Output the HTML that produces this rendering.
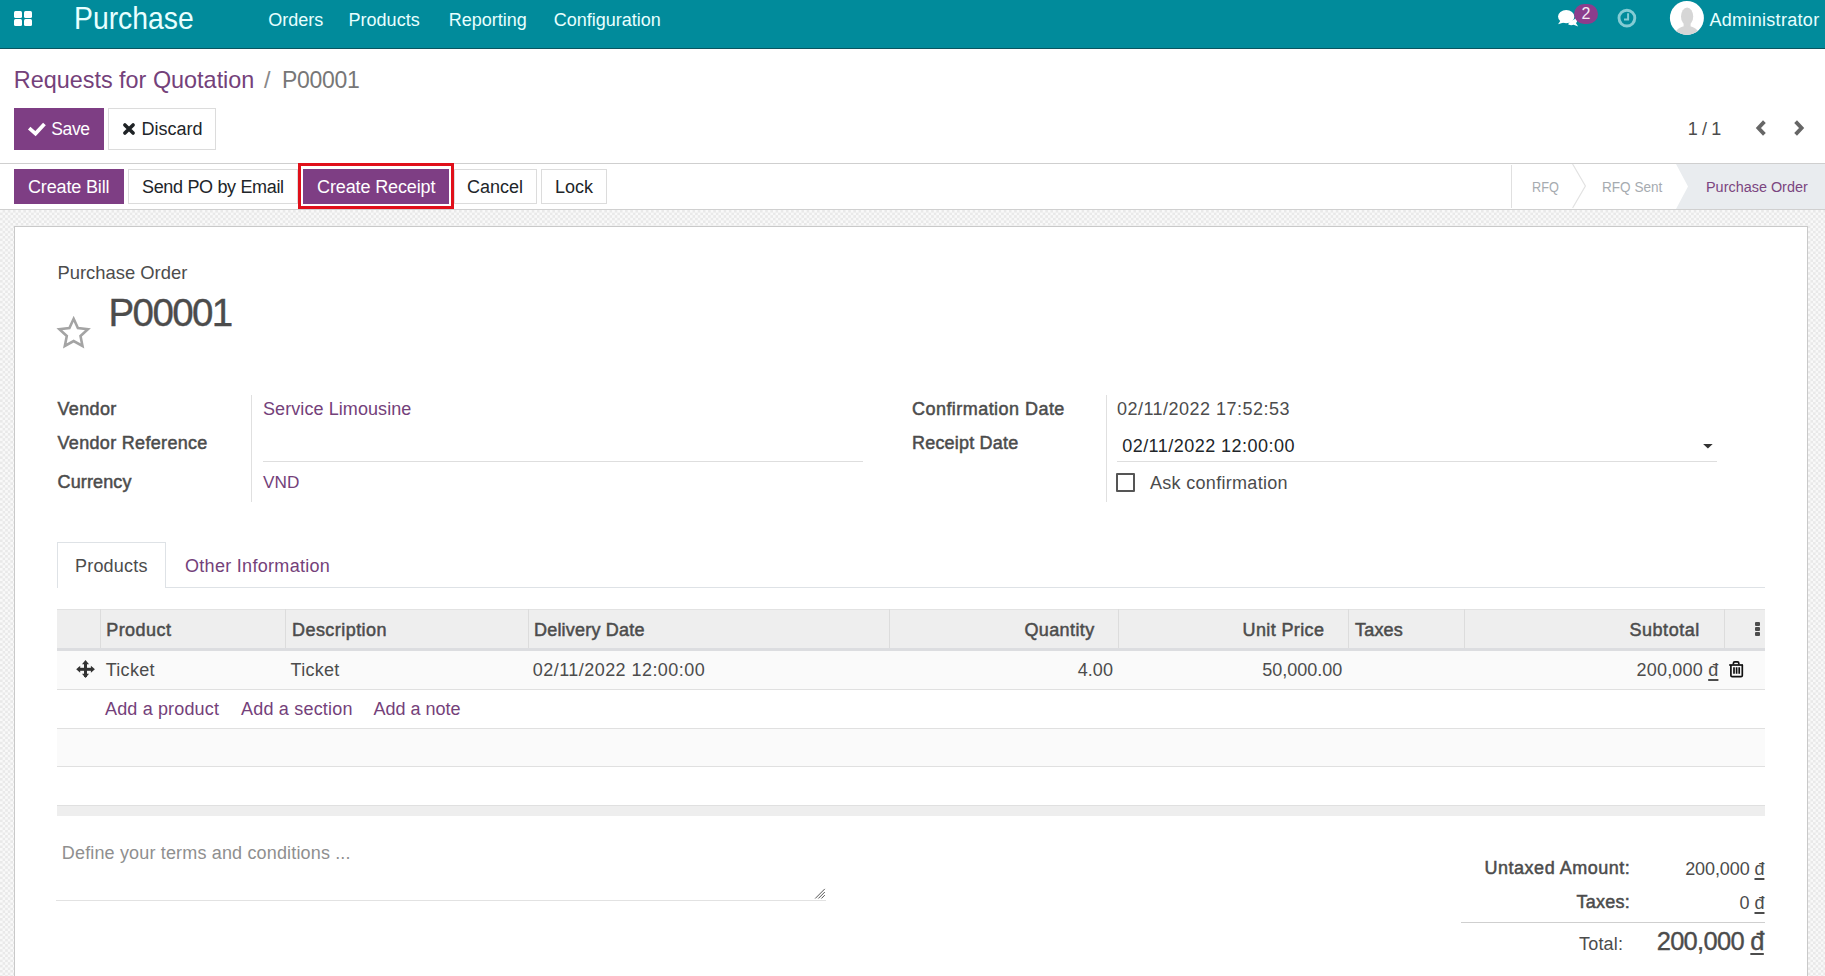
<!DOCTYPE html>
<html><head><meta charset="utf-8"><title>Purchase</title>
<style>
html,body{margin:0;padding:0;}
body{width:1825px;height:976px;overflow:hidden;position:relative;background:#fff;font-family:"Liberation Sans",sans-serif;}
.t{position:absolute;white-space:nowrap;}
.r{position:absolute;}
.dg{text-decoration:underline;text-decoration-thickness:1.5px;text-underline-offset:2.5px;}
svg{position:absolute;}
</style></head><body>
<div class="r" style="left:0px;top:0px;width:1825px;height:48px;background:#018b9b"></div>
<div class="r" style="left:0px;top:48px;width:1825px;height:1px;background:#0a5560"></div>
<div class="r" style="left:0px;top:210px;width:1825px;height:766px;background:repeating-conic-gradient(#e9e9e9 0 25%,#f9f9f9 0 50%) 0 0/5.2px 5.2px"></div>
<div class="r" style="left:0px;top:163px;width:1825px;height:1px;background:#cfcfcf"></div>
<div class="r" style="left:0px;top:209px;width:1825px;height:1px;background:#d0d0d0"></div>
<div class="r" style="left:14px;top:226px;width:1794px;height:774px;background:#fff;border:1px solid #c9c9c9;box-sizing:border-box"></div>
<div class="r" style="left:14px;top:11px;width:8px;height:7px;background:#fff;border-radius:1.5px"></div>
<div class="r" style="left:24px;top:11px;width:8px;height:7px;background:#fff;border-radius:1.5px"></div>
<div class="r" style="left:14px;top:19.3px;width:8px;height:7.0px;background:#fff;border-radius:1.5px"></div>
<div class="r" style="left:24px;top:19.3px;width:8px;height:7.0px;background:#fff;border-radius:1.5px"></div>
<div class="t" style="top:2.88px;font-size:31.2px;line-height:31.2px;color:#e8ffff;left:73.8px;transform:scaleX(0.908);transform-origin:0 0;">Purchase</div>
<div class="t" style="top:10.76px;font-size:18px;line-height:18px;color:#e8ffff;left:268.3px;">Orders</div>
<div class="t" style="top:10.76px;font-size:18px;line-height:18px;color:#e8ffff;left:348.6px;">Products</div>
<div class="t" style="top:10.76px;font-size:18px;line-height:18px;color:#e8ffff;left:448.7px;">Reporting</div>
<div class="t" style="top:10.76px;font-size:18px;line-height:18px;color:#e8ffff;left:553.7px;">Configuration</div>
<div class="t" style="top:10.56px;font-size:18px;line-height:18px;color:#e8ffff;letter-spacing:0.3px;left:1709.5px;">Administrator</div>
<div class="t" style="top:68.88px;font-size:23.4px;line-height:23.4px;color:#74417a;left:13.8px;">Requests for Quotation</div>
<div class="t" style="top:68.88px;font-size:23.4px;line-height:23.4px;color:#888;left:264px;">/</div>
<div class="t" style="top:69.22px;font-size:23px;line-height:23px;color:#777;letter-spacing:-0.3px;left:282px;">P00001</div>
<div class="r" style="left:14px;top:108px;width:90px;height:42px;background:#7e3e84"></div>
<div class="t" style="top:120.78px;font-size:17.5px;line-height:17.5px;color:#fff;letter-spacing:-0.4px;left:51.3px;">Save</div>
<div class="r" style="left:108px;top:108px;width:108px;height:42px;background:#fff;border:1px solid #dcdcdc;box-sizing:border-box"></div>
<div class="t" style="top:119.56px;font-size:18px;line-height:18px;color:#212529;left:141.6px;">Discard</div>
<div class="t" style="top:119.96px;font-size:18px;line-height:18px;color:#4c4c4c;letter-spacing:-0.4px;left:1687.8px;">1 / 1</div>
<div class="r" style="left:14px;top:169px;width:110px;height:35px;background:#7e3e84"></div>
<div class="t" style="top:178.16px;font-size:18px;line-height:18px;color:#fff;letter-spacing:-0.15px;left:28px;">Create Bill</div>
<div class="r" style="left:128px;top:169px;width:170px;height:35px;background:#fff;border:1px solid #dcdcdc;box-sizing:border-box"></div>
<div class="t" style="top:178.16px;font-size:18px;line-height:18px;color:#212529;letter-spacing:-0.33px;left:142px;">Send PO by Email</div>
<div class="r" style="left:454px;top:169px;width:83px;height:35px;background:#fff;border:1px solid #dcdcdc;box-sizing:border-box"></div>
<div class="t" style="top:178.16px;font-size:18px;line-height:18px;color:#212529;left:467px;">Cancel</div>
<div class="r" style="left:541px;top:169px;width:66px;height:35px;background:#fff;border:1px solid #dcdcdc;box-sizing:border-box"></div>
<div class="t" style="top:178.16px;font-size:18px;line-height:18px;color:#212529;left:555px;">Lock</div>
<div class="r" style="left:298px;top:163px;width:156px;height:46px;border:3px solid #e0101a;box-sizing:border-box"></div>
<div class="r" style="left:303px;top:169px;width:146px;height:35px;background:#7e3e84"></div>
<div class="t" style="top:178.16px;font-size:18px;line-height:18px;color:#fff;letter-spacing:-0.12px;left:317px;">Create Receipt</div>
<div class="r" style="left:1511px;top:165px;width:1px;height:43px;background:#e0e0e0"></div>
<div class="r" style="left:1676px;top:164px;width:149px;height:45px;background:#e9ecef;clip-path:polygon(0 0,100% 0,100% 100%,0 100%,12px 50%)"></div>
<div class="t" style="top:178.77px;font-size:15.5px;line-height:15.5px;color:#a6abb0;left:1531.5px;transform:scaleX(0.82);transform-origin:0 0;">RFQ</div>
<div class="t" style="top:178.77px;font-size:15.5px;line-height:15.5px;color:#a6abb0;left:1602.3px;transform:scaleX(0.875);transform-origin:0 0;">RFQ Sent</div>
<div class="t" style="top:178.77px;font-size:15.5px;line-height:15.5px;color:#7b4580;left:1705.7px;transform:scaleX(0.93);transform-origin:0 0;">Purchase Order</div>
<div class="t" style="top:264.42px;font-size:18.4px;line-height:18.4px;color:#4c4c4c;left:57.5px;">Purchase Order</div>
<div class="t" style="top:293.70px;font-size:38.5px;line-height:38.5px;color:#4c4c4c;letter-spacing:-1.6px;left:108.5px;-webkit-text-stroke:0.4px #4c4c4c;">P00001</div>
<div class="t" style="top:399.71px;font-size:18px;line-height:18px;color:#4c4c4c;letter-spacing:0.358px;left:57.5px;-webkit-text-stroke:0.5px #4c4c4c;">Vendor</div>
<div class="t" style="top:434.11px;font-size:18px;line-height:18px;color:#4c4c4c;letter-spacing:0.319px;left:57.5px;-webkit-text-stroke:0.5px #4c4c4c;">Vendor Reference</div>
<div class="t" style="top:473.11px;font-size:18px;line-height:18px;color:#4c4c4c;letter-spacing:0.135px;left:57.5px;-webkit-text-stroke:0.5px #4c4c4c;">Currency</div>
<div class="t" style="top:399.71px;font-size:18px;line-height:18px;color:#4c4c4c;letter-spacing:0.455px;left:912px;-webkit-text-stroke:0.5px #4c4c4c;">Confirmation Date</div>
<div class="t" style="top:433.71px;font-size:18px;line-height:18px;color:#4c4c4c;letter-spacing:0.195px;left:912px;-webkit-text-stroke:0.5px #4c4c4c;">Receipt Date</div>
<div class="r" style="left:251px;top:395px;width:1px;height:107px;background:#e0e0e0"></div>
<div class="r" style="left:1106px;top:395px;width:1px;height:107px;background:#e0e0e0"></div>
<div class="t" style="top:399.96px;font-size:18px;line-height:18px;color:#74417a;letter-spacing:0.08px;left:263px;">Service Limousine</div>
<div class="t" style="top:474.04px;font-size:17.2px;line-height:17.2px;color:#74417a;left:263px;">VND</div>
<div class="r" style="left:263px;top:461px;width:600px;height:1px;background:#dedede"></div>
<div class="t" style="top:399.96px;font-size:18px;line-height:18px;color:#4c4c4c;letter-spacing:0.48px;left:1117px;">02/11/2022 17:52:53</div>
<div class="t" style="top:436.56px;font-size:18px;line-height:18px;color:#212529;letter-spacing:0.47px;left:1122.2px;">02/11/2022 12:00:00</div>
<div class="r" style="left:1117px;top:461px;width:600px;height:1px;background:#dedede"></div>
<div class="r" style="left:1116px;top:473px;width:19px;height:19px;background:#fff;border:2px solid #555;box-sizing:border-box;border-radius:1px"></div>
<div class="t" style="top:473.76px;font-size:18px;line-height:18px;color:#4c4c4c;letter-spacing:0.3px;left:1150px;">Ask confirmation</div>
<div class="r" style="left:57px;top:587px;width:1708px;height:1px;background:#dee2e6"></div>
<div class="r" style="left:57px;top:542px;width:109px;height:46px;background:#fff;border:1px solid #dee2e6;border-bottom:none;box-sizing:border-box"></div>
<div class="t" style="top:556.76px;font-size:18px;line-height:18px;color:#4c4c4c;letter-spacing:0.2px;left:75px;">Products</div>
<div class="t" style="top:556.76px;font-size:18px;line-height:18px;color:#74417a;letter-spacing:0.3px;left:185px;">Other Information</div>
<div class="r" style="left:57px;top:609px;width:1708px;height:39px;background:#eeeeee"></div>
<div class="r" style="left:57px;top:648px;width:1708px;height:3px;background:#dcdde0"></div>
<div class="r" style="left:57px;top:609px;width:1708px;height:1px;background:#e2e2e2"></div>
<div class="r" style="left:100px;top:609px;width:1px;height:39px;background:#dcdcdc"></div>
<div class="r" style="left:285px;top:609px;width:1px;height:39px;background:#dcdcdc"></div>
<div class="r" style="left:528px;top:609px;width:1px;height:39px;background:#dcdcdc"></div>
<div class="r" style="left:889px;top:609px;width:1px;height:39px;background:#dcdcdc"></div>
<div class="r" style="left:1118px;top:609px;width:1px;height:39px;background:#dcdcdc"></div>
<div class="r" style="left:1348px;top:609px;width:1px;height:39px;background:#dcdcdc"></div>
<div class="r" style="left:1464px;top:609px;width:1px;height:39px;background:#dcdcdc"></div>
<div class="r" style="left:1724px;top:609px;width:1px;height:39px;background:#dcdcdc"></div>
<div class="t" style="top:621.11px;font-size:18px;line-height:18px;color:#4c4c4c;letter-spacing:0.467px;left:106.2px;-webkit-text-stroke:0.5px #4c4c4c;">Product</div>
<div class="t" style="top:621.11px;font-size:18px;line-height:18px;color:#4c4c4c;letter-spacing:0.451px;left:292px;-webkit-text-stroke:0.5px #4c4c4c;">Description</div>
<div class="t" style="top:621.11px;font-size:18px;line-height:18px;color:#4c4c4c;letter-spacing:0.205px;left:534px;-webkit-text-stroke:0.5px #4c4c4c;">Delivery Date</div>
<div class="t" style="top:621.11px;font-size:18px;line-height:18px;color:#4c4c4c;letter-spacing:0.396px;right:730.404px;text-align:right;-webkit-text-stroke:0.5px #4c4c4c;">Quantity</div>
<div class="t" style="top:621.11px;font-size:18px;line-height:18px;color:#4c4c4c;letter-spacing:0.378px;right:500.622px;text-align:right;-webkit-text-stroke:0.5px #4c4c4c;">Unit Price</div>
<div class="t" style="top:621.11px;font-size:18px;line-height:18px;color:#4c4c4c;letter-spacing:0.196px;left:1355px;-webkit-text-stroke:0.5px #4c4c4c;">Taxes</div>
<div class="t" style="top:621.11px;font-size:18px;line-height:18px;color:#4c4c4c;letter-spacing:0.519px;right:125.28099999999995px;text-align:right;-webkit-text-stroke:0.5px #4c4c4c;">Subtotal</div>
<div class="r" style="left:1754.5px;top:621.5px;width:5.0px;height:4.0px;background:#4c4c4c;border-radius:1px"></div>
<div class="r" style="left:1754.5px;top:626.5px;width:5.0px;height:4.0px;background:#4c4c4c;border-radius:1px"></div>
<div class="r" style="left:1754.5px;top:631.5px;width:5.0px;height:4.0px;background:#4c4c4c;border-radius:1px"></div>
<div class="r" style="left:57px;top:651px;width:1708px;height:38px;background:#fafafa"></div>
<div class="r" style="left:57px;top:689px;width:1708px;height:1px;background:#e0e0e0"></div>
<div class="t" style="top:660.76px;font-size:18px;line-height:18px;color:#4c4c4c;letter-spacing:0.3px;left:105.7px;">Ticket</div>
<div class="t" style="top:660.76px;font-size:18px;line-height:18px;color:#4c4c4c;letter-spacing:0.3px;left:290.5px;">Ticket</div>
<div class="t" style="top:660.56px;font-size:18px;line-height:18px;color:#4c4c4c;letter-spacing:0.45px;left:532.8px;">02/11/2022 12:00:00</div>
<div class="t" style="top:660.76px;font-size:18px;line-height:18px;color:#4c4c4c;right:712.0999999999999px;text-align:right;">4.00</div>
<div class="t" style="top:660.76px;font-size:18px;line-height:18px;color:#4c4c4c;right:482.70000000000005px;text-align:right;">50,000.00</div>
<div class="t" style="top:660.76px;font-size:18px;line-height:18px;color:#4c4c4c;letter-spacing:0.2px;right:106.59999999999995px;text-align:right;">200,000 <span class="dg">đ</span></div>
<div class="t" style="top:700.06px;font-size:18px;line-height:18px;color:#74417a;letter-spacing:0.15px;left:105px;">Add a product</div>
<div class="t" style="top:700.06px;font-size:18px;line-height:18px;color:#74417a;letter-spacing:0.2px;left:241px;">Add a section</div>
<div class="t" style="top:700.06px;font-size:18px;line-height:18px;color:#74417a;left:373.5px;">Add a note</div>
<div class="r" style="left:57px;top:728px;width:1708px;height:1px;background:#e0e0e0"></div>
<div class="r" style="left:57px;top:729px;width:1708px;height:37px;background:#fafafa"></div>
<div class="r" style="left:57px;top:766px;width:1708px;height:1px;background:#e0e0e0"></div>
<div class="r" style="left:57px;top:805px;width:1708px;height:1px;background:#e0e0e0"></div>
<div class="r" style="left:57px;top:806px;width:1708px;height:10px;background:#eeeeee"></div>
<div class="t" style="top:843.76px;font-size:18px;line-height:18px;color:#8f8f8f;letter-spacing:0.16px;left:61.8px;">Define your terms and conditions ...</div>
<div class="r" style="left:56px;top:900px;width:770px;height:1px;background:#e2e2e2"></div>
<div class="t" style="top:859.11px;font-size:18px;line-height:18px;color:#4c4c4c;letter-spacing:0.514px;right:194.68600000000004px;text-align:right;-webkit-text-stroke:0.5px #4c4c4c;">Untaxed Amount:</div>
<div class="t" style="top:859.56px;font-size:18px;line-height:18px;color:#4c4c4c;letter-spacing:-0.1px;right:60.6px;text-align:right;">200,000 <span class="dg">đ</span></div>
<div class="t" style="top:893.11px;font-size:18px;line-height:18px;color:#4c4c4c;letter-spacing:0.246px;right:194.95400000000004px;text-align:right;-webkit-text-stroke:0.5px #4c4c4c;">Taxes:</div>
<div class="t" style="top:893.56px;font-size:18px;line-height:18px;color:#4c4c4c;right:60.5px;text-align:right;">0 <span class="dg">đ</span></div>
<div class="r" style="left:1461px;top:922px;width:304px;height:1px;background:#cfcfcf"></div>
<div class="t" style="top:935.16px;font-size:18px;line-height:18px;color:#4c4c4c;letter-spacing:0.2px;right:201.8px;text-align:right;">Total:</div>
<div class="t" style="top:928.71px;font-size:25.5px;line-height:25.5px;color:#4c4c4c;letter-spacing:-0.7px;right:61.2px;text-align:right;-webkit-text-stroke:0.35px #4c4c4c;">200,000 <span class="dg">đ</span></div>
<svg style="left:26px;top:118px" width="22" height="22" viewBox="26 118 22 22"><polyline points="30.6,129.4 35.5,133.6 43.2,125.3" fill="none" stroke="#fff" stroke-width="3.7" stroke-linecap="square"/></svg>
<svg style="left:118px;top:118px" width="22" height="22" viewBox="118 118 22 22"><path d="M124.9,124.9 L133.1,133.1 M133.1,124.9 L124.9,133.1" stroke="#1f2326" stroke-width="3.6" stroke-linecap="round"/></svg>
<svg style="left:1750px;top:114px" width="60" height="28" viewBox="1750 114 60 28"><polyline points="1764.4,121.6 1758.4,128 1764.4,134.4" fill="none" stroke="#666" stroke-width="3.8"/><polyline points="1795.6,121.6 1801.6,128 1795.6,134.4" fill="none" stroke="#666" stroke-width="3.8"/></svg>
<svg style="left:52px;top:310px" width="44" height="44" viewBox="52 310 44 44"><polygon points="73.65,318.80 77.88,327.98 87.92,329.16 80.50,336.02 82.47,345.94 73.65,341.00 64.83,345.94 66.80,336.02 59.38,329.16 69.42,327.98" fill="none" stroke="#a4a4a4" stroke-width="2.6" stroke-linejoin="miter"/></svg>
<svg style="left:1552px;top:4px" width="30" height="28" viewBox="1552 4 30 28"><path d="M1570.5,21 q4.5,-1 6,-4.5 l0,0 q1.8,3.5 -0.5,6.8 l2.2,3.1 l-4.6,-1.6 q-2.8,0.9 -5.6,-0.6 z" fill="#fff"/><ellipse cx="1566.2" cy="16.6" rx="8.2" ry="6.6" fill="#fff"/><path d="M1560.5,20.6 l-2.4,3.6 l5.6,-1.8 z" fill="#fff"/></svg>
<div class="r" style="left:1573.6px;top:4.4px;width:24.100000000000136px;height:19.700000000000003px;background:#8c3d8c;border-radius:10px"></div>
<div class="t" style="top:6.25px;font-size:16px;line-height:16px;color:#f4eaf4;left:1581.4px;">2</div>
<svg style="left:1614px;top:6px" width="26" height="26" viewBox="1614 6 26 26"><circle cx="1626.9" cy="18.1" r="7.9" fill="none" stroke="#84ccd4" stroke-width="2.9"/><polyline points="1628.1,13.3 1628.1,19.5 1624,19.5" fill="none" stroke="#84ccd4" stroke-width="2"/></svg>
<svg style="left:1668px;top:0px" width="38" height="38" viewBox="1668 0 38 38"><defs><clipPath id="av"><circle cx="1686.9" cy="17.9" r="17"/></clipPath></defs><circle cx="1686.9" cy="17.9" r="17" fill="#fff"/><g clip-path="url(#av)" fill="#d6d6d6"><ellipse cx="1687.1" cy="16.4" rx="6.1" ry="8.8"/><rect x="1683.6" y="20" width="7" height="7"/><ellipse cx="1687" cy="36.2" rx="12.8" ry="10.2"/></g></svg>
<svg style="left:74px;top:657px" width="24" height="24" viewBox="74 657 24 24"><g fill="#333"><rect x="84" y="662" width="3" height="15"/><rect x="78" y="667.8" width="15" height="3"/><polygon points="85.5,659.9 89,664.2 82,664.2"/><polygon points="85.5,678.1 89,673.8 82,673.8"/><polygon points="76.2,669.3 80.2,665.8 80.2,672.8"/><polygon points="94.9,669.3 90.9,665.8 90.9,672.8"/></g></svg>
<svg style="left:1726px;top:658px" width="20" height="22" viewBox="1726 658 20 22"><g fill="none" stroke="#111" stroke-width="1.7"><path d="M1729.2,665 H1743"/><path d="M1733.4,664.6 v-1.3 q0,-1.4 1.4,-1.4 h2.6 q1.4,0 1.4,1.4 v1.3"/><path d="M1730.9,665 v10.4 q0,1.3 1.3,1.3 h8.8 q1.3,0 1.3,-1.3 v-10.4"/><path d="M1734,667.3 v6.4 M1736.6,667.3 v6.4 M1739.2,667.3 v6.4"/></g></svg>
<svg style="left:1700px;top:440px" width="16" height="12" viewBox="1700 440 16 12"><polygon points="1703.1,443.9 1712.7,443.9 1707.9,448.6" fill="#333"/></svg>
<svg style="left:1560px;top:163px" width="140" height="47" viewBox="1560 163 140 47"><polyline points="1572.6,164 1585.4,186 1572.6,208" fill="none" stroke="#e2e2e2" stroke-width="1.2"/></svg>
<svg style="left:810px;top:884px" width="18" height="18" viewBox="810 884 18 18"><path d="M815.2,898.5 L824.8,888.9 M818.3,898.5 L824.8,892 M821.4,898.5 L824.8,895.1" stroke="#555" stroke-width="1"/></svg>
</body></html>
